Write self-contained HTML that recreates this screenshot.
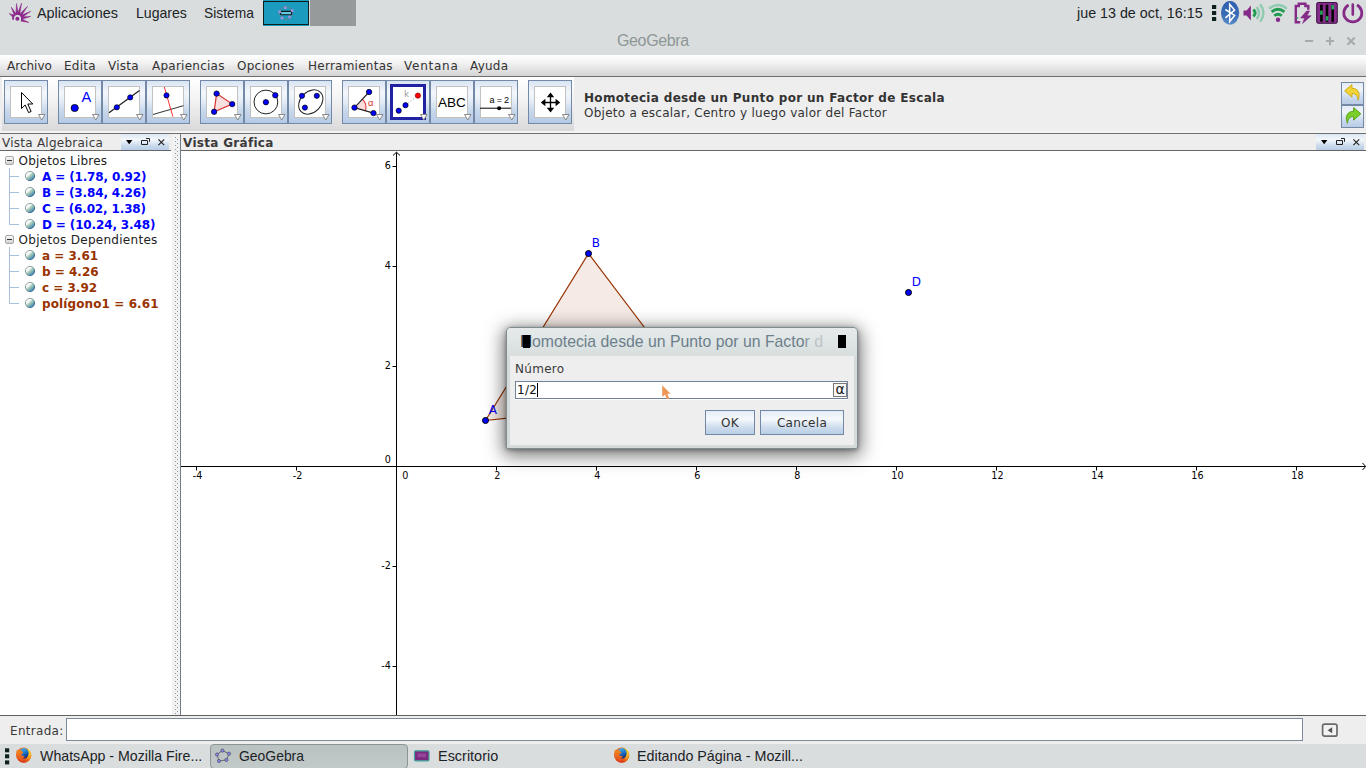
<!DOCTYPE html>
<html lang="es">
<head>
<meta charset="utf-8">
<title>GeoGebra</title>
<style>
html,body{margin:0;padding:0;}
body{width:1366px;height:768px;overflow:hidden;position:relative;background:#eeeeee;font-family:"DejaVu Sans","Liberation Sans",sans-serif;font-size:12px;color:#333;}
.abs{position:absolute;}
.t{position:absolute;white-space:nowrap;line-height:16px;height:16px;}
/* top gnome panel + window title */
#panel{left:0;top:0;width:1366px;height:55px;background:#d9dddd;}
.pf{font-family:"Liberation Sans",sans-serif;color:#1c2326;font-size:15px;transform-origin:0 0;line-height:18px;height:18px;}
.vbtn{background:linear-gradient(#dbe6f4,#f3f7fb 35%,#cddcee 70%,#b7cde6);}
/* menubar */
#menubar{left:0;top:55px;width:1366px;height:21px;background:linear-gradient(#ffffff,#f1f1f1 40%,#e0e0e0 75%,#d4d4d4);border-bottom:1px solid #6e6e6e;}
#menubar .t{top:3px;font-size:12px;color:#333;letter-spacing:0.25px;}
/* toolbar */
#toolbar{left:0;top:77px;width:1366px;height:55px;background:#eeeeee;}
#tbgrad{left:2px;top:0;width:572px;height:54px;background:linear-gradient(#ffffff,#f4f4f4 40%,#d9d9d9);}
.tb{position:absolute;top:3px;width:44px;height:44px;border:1px solid #7389a6;box-sizing:border-box;background:linear-gradient(#d9e4f3,#f3f7fc 28%,#e4edf7 48%,#c6d7ec 72%,#b4cae5);}
.tb .ic{position:absolute;left:5px;top:5px;width:32px;height:32px;background:#fff;border:1px solid #c3c1bf;box-sizing:border-box;}
.tb svg{position:absolute;left:5px;top:5px;overflow:visible;}
.tb .dd{position:absolute;left:33px;top:33px;}
.ur{position:absolute;left:1341px;width:23px;height:23px;box-sizing:border-box;border:1px solid #7389a6;background:linear-gradient(#e3ebf6,#f0f4fa 30%,#c5d6ec 75%,#b8cce5);}
.jb{box-sizing:border-box;border:1px solid #7388a5;background:linear-gradient(#e4ecf6,#f6f9fc 35%,#cfdded 70%,#b9cee6);text-align:center;color:#333;letter-spacing:0.3px;line-height:23px;padding-top:1px;}
.tb.sel .ic{left:3px;top:3px;width:36px;height:36px;border:3px solid #2121a3;}
</style>
</head>
<body>
<div id="panel" class="abs">
<svg class="abs" style="left:0;top:0" width="40" height="27"><path d="M14.5,15.3 L9.2,13.4 L13.1,17.4 Z M16.5,14.3 L11.2,7.1 L14.3,15.5 Z M18.4,14.3 L16.5,3.5 L15.9,14.5 Z M19.7,14.9 L21.6,3.1 L17.3,14.2 Z M21.1,16.2 L27.6,6.2 L19.2,14.6 Z M21.8,17.7 L30.7,11.3 L20.5,15.5 Z M21.8,19.2 L30.7,16.5 L21.4,16.8 Z M21.1,21.2 L28.9,22.5 L21.9,18.9 Z" fill="#8d2a8c" stroke="#8d2a8c" stroke-width="0.5" stroke-linejoin="round"/><path d="M13.2,19.8 A4.6,4.6 0 1 1 21.6,20.6" fill="none" stroke="#8d2a8c" stroke-width="1.9"/><circle cx="17.4" cy="18.7" r="2" fill="#8d2a8c"/></svg>
<span class="t pf" style="left:37px;top:4.2px;transform:scaleX(0.960)">Aplicaciones</span>
<span class="t pf" style="left:136px;top:4.2px;transform:scaleX(0.939)">Lugares</span>
<span class="t pf" style="left:204px;top:4.2px;transform:scaleX(0.919)">Sistema</span>
<div class="abs" style="left:263px;top:0;width:46px;height:26px;background:#1b9bbd;"></div>
<div class="abs" style="left:263px;top:1px;width:46px;height:24px;box-sizing:border-box;border:1px solid #0d1f1f;"></div>
<svg class="abs" style="left:276px;top:4px" width="20" height="18"><circle cx="10" cy="9" r="6.3" fill="none" stroke="#6f7c80" stroke-width="0.9"/><rect x="4.6" y="7.4" width="11" height="3.4" rx="0.8" fill="#63c8e0" stroke="#121a1a" stroke-width="1.1"/><circle cx="9.3" cy="3.8" r="1.5" fill="#9d90e6"/><circle cx="16.2" cy="6.6" r="1.5" fill="#9d90e6"/><circle cx="13.6" cy="13.1" r="1.5" fill="#9d90e6"/><circle cx="6" cy="13.9" r="1.5" fill="#9d90e6"/><circle cx="3.6" cy="7.7" r="1.5" fill="#9d90e6"/></svg>
<div class="abs" style="left:310px;top:0;width:46px;height:26px;background:#969a9a;"></div>
<span class="t pf" style="left:1077px;top:4.2px;transform:scaleX(0.953)">jue 13 de oct, 16:15</span>
<svg class="abs" style="left:1206px;top:0" width="160" height="27">
<rect x="6" y="5" width="4.2" height="4" fill="#0d2020"/><rect x="6" y="11" width="4.2" height="4" fill="#0d2020"/><rect x="6" y="17" width="4.2" height="4" fill="#0d2020"/>
<defs><linearGradient id="btg" x1="0" y1="0" x2="0" y2="1"><stop offset="0" stop-color="#2f5fae"/><stop offset="0.6" stop-color="#3a6cb6"/><stop offset="1" stop-color="#5b8cc8"/></linearGradient></defs>
<ellipse cx="24.1" cy="12.8" rx="9.1" ry="11.8" fill="url(#btg)"/>
<path d="M19.4,9.5 L28.6,15.4 L23.7,21.5 L23.7,4.3 L28.6,10.1 L19.4,17.8" fill="none" stroke="#fff" stroke-width="1.5" stroke-linejoin="miter"/>
<path d="M37.5,10.5 H40.6 L44.9,5.5 V20.6 L40.6,15.4 H37.5 Z" fill="#852a88"/>
<path d="M47.4,9.6 Q50.8,13 47.4,16.5" fill="none" stroke="#1f9a50" stroke-width="2.8"/>
<path d="M50.8,7 Q55.2,13 50.8,19" fill="none" stroke="#8fcbae" stroke-width="2.5"/>
<path d="M54.2,4.3 Q60.6,13 54.2,21.6" fill="none" stroke="#8fcbae" stroke-width="2.4"/>
<circle cx="72" cy="19.7" r="2.2" fill="#852a88"/>
<path d="M68.3,15.8 Q72,12.6 75.7,15.8" fill="none" stroke="#1f9a50" stroke-width="2.8"/>
<path d="M65.6,11.9 Q72,6.6 78.4,11.9" fill="none" stroke="#1f9a50" stroke-width="2.8"/>
<path d="M63.2,8.6 Q72,1.4 80.8,8.6" fill="none" stroke="#8fcbae" stroke-width="2.5"/>
<path d="M94.2,22.2 H89.8 V6 H92.8 V3.8 H99.4 V6 H102.3 V9.8" fill="none" stroke="#852a88" stroke-width="2.4"/>
<path d="M100.6,11 L94.6,18 H98.6 L96.6,23.4 L105.2,15.8 H101 L103.6,11 Z" fill="#852a88" stroke="#852a88" stroke-width="0.6" stroke-linejoin="round"/>
<rect x="90.6" y="17" width="1.6" height="2" fill="#3fae6a"/>
<rect x="110.7" y="2.5" width="20.6" height="20.8" rx="1.5" fill="#862c8a" stroke="#3a1040" stroke-width="1"/>
<rect x="114.1" y="4.5" width="2.6" height="17.5" rx="1" fill="#050505"/><rect x="119.7" y="4.5" width="2.6" height="17.5" rx="1" fill="#050505"/><rect x="125.4" y="4.5" width="2.6" height="17.5" rx="1" fill="#050505"/>
<rect x="114.1" y="10.6" width="2.6" height="4.2" fill="#22a85a"/><rect x="119.7" y="16.2" width="2.6" height="4.4" fill="#22a85a"/><rect x="125.4" y="5" width="2.6" height="4.4" fill="#22a85a"/>
<path d="M142.6,5 A9,9 0 1 0 151,5" fill="none" stroke="#852a88" stroke-width="2.7"/><path d="M146.8,4.6 V14.6" stroke="#852a88" stroke-width="2.6" stroke-linecap="round"/>
</svg>
<span class="t" style="left:617px;top:32.8px;font-family:'Liberation Sans',sans-serif;font-size:16px;letter-spacing:-0.36px;color:#8e9797;">GeoGebra</span>
<svg class="abs" style="left:1300px;top:32px" width="60" height="16"><path d="M5,9 H13.2" stroke="#a6acac" stroke-width="2"/><path d="M26,9 H34 M30,5 V13.2" stroke="#a6acac" stroke-width="2"/><path d="M47.4,5.4 L54.8,12.8 M54.8,5.4 L47.4,12.8" stroke="#a6acac" stroke-width="2.1"/></svg>
</div>
<div id="menubar" class="abs">
<span class="t" style="left:7px;letter-spacing:0">Archivo</span>
<span class="t" style="left:64px">Edita</span>
<span class="t" style="left:108px">Vista</span>
<span class="t" style="left:152px">Apariencias</span>
<span class="t" style="left:237px">Opciones</span>
<span class="t" style="left:308px">Herramientas</span>
<span class="t" style="left:404px;letter-spacing:0.75px">Ventana</span>
<span class="t" style="left:470px">Ayuda</span>
</div>
<div id="toolbar" class="abs"><div id="tbgrad" class="abs"></div>
<div class="tb" style="left:4px"><div class="ic"></div><svg width="32" height="32"><path d="M11.5,6.5 L11.5,22.5 L15.2,19 L18.6,26.6 L21.1,25.5 L17.8,18 L22.8,18 Z" fill="#fff" stroke="#000" stroke-width="1"/></svg><svg class="dd" width="9" height="8"><path d="M0.5,0.5 L7,0.5 L3.75,6 Z" fill="#fff" stroke="#888"/></svg></div>
<div class="tb" style="left:58px"><div class="ic"></div><svg width="32" height="32"><circle cx="10.7" cy="22" r="3.6" fill="#0000ff" stroke="#000" stroke-width="0.8"/><text x="17.4" y="16.4" font-family="Liberation Sans,sans-serif" font-size="14.5" fill="#0000ff">A</text></svg><svg class="dd" width="9" height="8"><path d="M0.5,0.5 L7,0.5 L3.75,6 Z" fill="#fff" stroke="#888"/></svg></div>
<div class="tb" style="left:102px"><div class="ic"></div><svg width="32" height="32"><path d="M1,26.8 L31.5,4.4" stroke="#222" stroke-width="1.3" fill="none"/><circle cx="8.8" cy="21.3" r="2.6" fill="#0000ff" stroke="#000" stroke-width="0.7"/><circle cx="22.2" cy="11.4" r="2.6" fill="#0000ff" stroke="#000" stroke-width="0.7"/></svg><svg class="dd" width="9" height="8"><path d="M0.5,0.5 L7,0.5 L3.75,6 Z" fill="#fff" stroke="#888"/></svg></div>
<div class="tb" style="left:146px"><div class="ic"></div><svg width="32" height="32"><path d="M1,28.5 L31.4,19.7" stroke="#333" stroke-width="1" fill="none"/><path d="M12.3,1 L20.9,30.7" stroke="#ff3030" stroke-width="1" fill="none"/><circle cx="14.5" cy="9.4" r="2.6" fill="#0000ff" stroke="#000" stroke-width="0.7"/></svg><svg class="dd" width="9" height="8"><path d="M0.5,0.5 L7,0.5 L3.75,6 Z" fill="#fff" stroke="#888"/></svg></div>
<div class="tb" style="left:200px"><div class="ic"></div><svg width="32" height="32"><path d="M10.6,7.6 L26.2,18.1 L8.1,25.8 Z" fill="#f9e0e0" stroke="#d83535" stroke-width="1.2"/><circle cx="10.6" cy="7.6" r="2.7" fill="#0000ff" stroke="#000" stroke-width="0.7"/><circle cx="26.2" cy="18.1" r="2.7" fill="#0000ff" stroke="#000" stroke-width="0.7"/><circle cx="8.1" cy="25.8" r="2.7" fill="#0000ff" stroke="#000" stroke-width="0.7"/></svg><svg class="dd" width="9" height="8"><path d="M0.5,0.5 L7,0.5 L3.75,6 Z" fill="#fff" stroke="#888"/></svg></div>
<div class="tb" style="left:244px"><div class="ic"></div><svg width="32" height="32"><circle cx="15.9" cy="16" r="11.9" fill="none" stroke="#222" stroke-width="1"/><circle cx="15.9" cy="16.2" r="2.7" fill="#0000ff" stroke="#000" stroke-width="0.7"/><circle cx="25.3" cy="9.3" r="2.7" fill="#0000ff" stroke="#000" stroke-width="0.7"/></svg><svg class="dd" width="9" height="8"><path d="M0.5,0.5 L7,0.5 L3.75,6 Z" fill="#fff" stroke="#888"/></svg></div>
<div class="tb" style="left:288px"><div class="ic"></div><svg width="32" height="32"><ellipse cx="16.8" cy="16" rx="13.7" ry="10.3" transform="rotate(-45 16.8 16)" fill="none" stroke="#222" stroke-width="1"/><circle cx="8" cy="9.8" r="2.6" fill="#0000ff" stroke="#000" stroke-width="0.7"/><circle cx="22.8" cy="9.8" r="2.6" fill="#0000ff" stroke="#000" stroke-width="0.7"/><circle cx="10.9" cy="21.6" r="2.6" fill="#0000ff" stroke="#000" stroke-width="0.7"/></svg><svg class="dd" width="9" height="8"><path d="M0.5,0.5 L7,0.5 L3.75,6 Z" fill="#fff" stroke="#888"/></svg></div>
<div class="tb" style="left:342px"><div class="ic"></div><svg width="32" height="32"><path d="M6.5,21.6 L14.4,13.2 A11.5,11.5 0 0 1 17.5,24.8 Z" fill="#fbdcdc" stroke="none"/><path d="M14.4,13.2 A11.5,11.5 0 0 1 17.5,24.8" fill="none" stroke="#e03030" stroke-width="1.1"/><path d="M21.1,6 L6.5,21.6 L25.5,27.1" fill="none" stroke="#222" stroke-width="1.1"/><circle cx="6.5" cy="21.6" r="2.7" fill="#0000ff" stroke="#000" stroke-width="0.7"/><circle cx="21.1" cy="6" r="2.7" fill="#0000ff" stroke="#000" stroke-width="0.7"/><circle cx="25.5" cy="27.1" r="2.7" fill="#0000ff" stroke="#000" stroke-width="0.7"/><text x="20" y="19.6" font-family="Liberation Sans,sans-serif" font-size="9.5" fill="#e03030">α</text></svg><svg class="dd" width="9" height="8"><path d="M0.5,0.5 L7,0.5 L3.75,6 Z" fill="#fff" stroke="#888"/></svg></div>
<div class="tb sel" style="left:386px"><div class="ic"></div><svg width="32" height="32"><path d="M13.5,19.2 L25.9,9.6" stroke="#aaa" stroke-width="1" stroke-dasharray="1.2,2" fill="none"/><circle cx="6.7" cy="24.7" r="2.6" fill="#0000ff" stroke="#000" stroke-width="0.7"/><circle cx="13.5" cy="19.2" r="2.6" fill="#0000ff" stroke="#000" stroke-width="0.7"/><circle cx="25.9" cy="9.6" r="2.6" fill="#ff0000" stroke="#800" stroke-width="0.7"/><text x="12.2" y="10.9" font-family="Liberation Sans,sans-serif" font-size="9" fill="#9c9c9c">k</text></svg><svg class="dd" width="9" height="8"><path d="M0.5,0.5 L7,0.5 L3.75,6 Z" fill="#fff" stroke="#888"/></svg></div>
<div class="tb" style="left:430px"><div class="ic"></div><svg width="32" height="32"><text x="2" y="20.8" font-family="Liberation Sans,sans-serif" font-size="13.5" fill="#000">ABC</text></svg><svg class="dd" width="9" height="8"><path d="M0.5,0.5 L7,0.5 L3.75,6 Z" fill="#fff" stroke="#888"/></svg></div>
<div class="tb" style="left:474px"><div class="ic"></div><svg width="32" height="32"><path d="M0,22.2 L31,22.2" stroke="#000" stroke-width="1" fill="none"/><circle cx="19.1" cy="22.2" r="2" fill="#000"/><text x="9.6" y="16.8" font-family="Liberation Sans,sans-serif" font-size="9" fill="#000" letter-spacing="-0.2">a = 2</text></svg><svg class="dd" width="9" height="8"><path d="M0.5,0.5 L7,0.5 L3.75,6 Z" fill="#fff" stroke="#888"/></svg></div>
<div class="tb" style="left:528px"><div class="ic"></div><svg width="32" height="32"><path d="M16.5,9 V24 M9.5,16.5 H23.5" stroke="#000" stroke-width="1.3" fill="none"/><path d="M16.5,6.6 L20.2,11.2 H12.8 Z M16.5,26.4 L20.2,21.8 H12.8 Z M6.8,16.5 L11.4,12.8 V20.2 Z M26.2,16.5 L21.6,12.8 V20.2 Z" fill="#000"/></svg><svg class="dd" width="9" height="8"><path d="M0.5,0.5 L7,0.5 L3.75,6 Z" fill="#fff" stroke="#888"/></svg></div>
<span class="t" style="left:584px;top:13px;font-weight:bold;letter-spacing:0.33px;">Homotecia desde un Punto por un Factor de Escala</span>
<span class="t" style="left:584px;top:28px;letter-spacing:0.26px;">Objeto a escalar, Centro y luego valor del Factor</span>
<div class="ur" style="top:5px"><svg width="21" height="21" viewBox="0 0 21 21"><path d="M3.5,8.5 L10,3 L10,6.3 C15.5,6.3 17.8,10.5 15.5,17 C15,13 13.5,11 10,11 L10,14.2 Z" fill="#f2d43a" stroke="#c9a50a" stroke-width="0.8" stroke-linejoin="round" transform="translate(10.5,10) scale(1.12) translate(-10.5,-10.5)"/></svg></div>
<div class="ur" style="top:28px"><svg width="21" height="21" viewBox="0 0 21 21"><path d="M18,8.5 L11.5,3 L11.5,6.3 C6,6.3 3.7,10.5 6,17 C6.5,13 8,11 11.5,11 L11.5,14.2 Z" fill="#7ccf2a" stroke="#4f9a10" stroke-width="0.8" stroke-linejoin="round" transform="translate(10.5,10) scale(1.12) translate(-10.5,-10.5)"/></svg></div>

</div>
<div class="abs" style="left:0;top:131px;width:1366px;height:2px;background:#f3f3f3"></div>
<div class="abs" style="left:0;top:133px;width:1366px;height:1px;background:#707070"></div>
<!-- algebra title -->
<div class="abs" style="left:0;top:134px;width:171px;height:16px;background:#eeeeee;border-bottom:1px solid #666;"></div>
<div class="abs vbtn" style="left:121px;top:134px;width:48px;height:16px;"></div>
<svg class="abs" style="left:121px;top:134px" width="48" height="16"><path d="M5,6 H11.4 L8.2,10.3 Z" fill="#000"/><path d="M20.5,6.5 H26.5 V10.5 H20.5 Z" fill="none" stroke="#222" stroke-width="1"/><path d="M25,4.5 H28.5 V7.8" fill="none" stroke="#222" stroke-width="1"/><path d="M37.4,5.4 L43.2,11.2 M43.2,5.4 L37.4,11.2" stroke="#222" stroke-width="1.15"/></svg>
<span class="t" style="left:2px;top:134.8px;color:#3a3a3a;letter-spacing:0.25px">Vista Algebraica</span>
<!-- algebra view -->
<div id="alg" class="abs" style="left:0;top:151px;width:172px;height:564px;background:#fff;">
<svg class="abs" style="left:0;top:0" width="172" height="170"><defs><linearGradient id="sph" x1="0.15" y1="0.1" x2="0.85" y2="0.9"><stop offset="0" stop-color="#ffffff"/><stop offset="0.3" stop-color="#f4f8f4"/><stop offset="0.5" stop-color="#a9ccb8"/><stop offset="0.75" stop-color="#6da4b6"/><stop offset="1" stop-color="#3a78a8"/></linearGradient><linearGradient id="sphs" x1="0.15" y1="0.1" x2="0.85" y2="0.9"><stop offset="0" stop-color="#9aa6a6"/><stop offset="1" stop-color="#2f6a90"/></linearGradient><linearGradient id="exg" x1="0" y1="0" x2="0" y2="1"><stop offset="0" stop-color="#fbfbfb"/><stop offset="1" stop-color="#cfcfcf"/></linearGradient></defs>
<path d="M9.5,17 L9.5,73.5" stroke="#a9c0dd" stroke-width="1" fill="none"/>
<path d="M9.5,96 L9.5,152.5" stroke="#a9c0dd" stroke-width="1" fill="none"/>
<rect x="5.5" y="5.5" width="8" height="8" rx="1.5" fill="url(#exg)" stroke="#a8a8a8"/>
<path d="M7,9.5 H12" stroke="#333" stroke-width="1"/>
<path d="M9.5,25.5 L19,25.5" stroke="#a9c0dd" stroke-width="1" fill="none"/>
<circle cx="30" cy="25.0" r="4.6" fill="url(#sph)" stroke="url(#sphs)" stroke-width="1"/>
<path d="M9.5,41.5 L19,41.5" stroke="#a9c0dd" stroke-width="1" fill="none"/>
<circle cx="30" cy="41.0" r="4.6" fill="url(#sph)" stroke="url(#sphs)" stroke-width="1"/>
<path d="M9.5,57.5 L19,57.5" stroke="#a9c0dd" stroke-width="1" fill="none"/>
<circle cx="30" cy="57.0" r="4.6" fill="url(#sph)" stroke="url(#sphs)" stroke-width="1"/>
<path d="M9.5,73.5 L19,73.5" stroke="#a9c0dd" stroke-width="1" fill="none"/>
<circle cx="30" cy="73.0" r="4.6" fill="url(#sph)" stroke="url(#sphs)" stroke-width="1"/>
<rect x="5.5" y="84.5" width="8" height="8" rx="1.5" fill="url(#exg)" stroke="#a8a8a8"/>
<path d="M7,88.5 H12" stroke="#333" stroke-width="1"/>
<path d="M9.5,104.5 L19,104.5" stroke="#a9c0dd" stroke-width="1" fill="none"/>
<circle cx="30" cy="104.0" r="4.6" fill="url(#sph)" stroke="url(#sphs)" stroke-width="1"/>
<path d="M9.5,120.5 L19,120.5" stroke="#a9c0dd" stroke-width="1" fill="none"/>
<circle cx="30" cy="120.0" r="4.6" fill="url(#sph)" stroke="url(#sphs)" stroke-width="1"/>
<path d="M9.5,136.5 L19,136.5" stroke="#a9c0dd" stroke-width="1" fill="none"/>
<circle cx="30" cy="136.0" r="4.6" fill="url(#sph)" stroke="url(#sphs)" stroke-width="1"/>
<path d="M9.5,152.5 L19,152.5" stroke="#a9c0dd" stroke-width="1" fill="none"/>
<circle cx="30" cy="152.0" r="4.6" fill="url(#sph)" stroke="url(#sphs)" stroke-width="1"/>
</svg>
<span class="t" style="left:18.6px;top:2.2px;color:#222;letter-spacing:0.2px">Objetos Libres</span>
<span class="t" style="left:42px;top:18.2px;color:#0000ff;font-weight:bold;letter-spacing:-0.14px">A = (1.78, 0.92)</span>
<span class="t" style="left:42px;top:34.2px;color:#0000ff;font-weight:bold;letter-spacing:-0.14px">B = (3.84, 4.26)</span>
<span class="t" style="left:42px;top:50.2px;color:#0000ff;font-weight:bold;letter-spacing:-0.14px">C = (6.02, 1.38)</span>
<span class="t" style="left:42px;top:66.2px;color:#0000ff;font-weight:bold;letter-spacing:-0.14px">D = (10.24, 3.48)</span>
<span class="t" style="left:18.6px;top:81.2px;color:#222;letter-spacing:0.28px">Objetos Dependientes</span>
<span class="t" style="left:42px;top:97.2px;color:#993300;font-weight:bold;letter-spacing:0px">a = 3.61</span>
<span class="t" style="left:42px;top:113.2px;color:#993300;font-weight:bold;letter-spacing:0px">b = 4.26</span>
<span class="t" style="left:42px;top:129.2px;color:#993300;font-weight:bold;letter-spacing:0px">c = 3.92</span>
<span class="t" style="left:42px;top:145.2px;color:#993300;font-weight:bold;letter-spacing:0.1px">polígono1 = 6.61</span>
</div>
<!-- divider -->
<div class="abs" style="left:172px;top:134px;width:8px;height:581px;background:#f1f1f1;"></div>
<div class="abs" style="left:175px;top:137px;width:1px;height:577px;background:repeating-linear-gradient(#8c9cac 0 1px,transparent 1px 4px);"></div>
<div class="abs" style="left:177px;top:139px;width:1px;height:575px;background:repeating-linear-gradient(#8c9cac 0 1px,transparent 1px 4px);"></div>
<div class="abs" style="left:180px;top:134px;width:1px;height:581px;background:#6e7c8c;"></div>
<!-- graphics title -->
<div class="abs" style="left:181px;top:134px;width:1185px;height:16px;background:#eeeeee;border-bottom:1px solid #666;"></div>
<div class="abs vbtn" style="left:1316px;top:134px;width:48px;height:16px;"></div>
<svg class="abs" style="left:1316px;top:134px" width="48" height="16"><path d="M5,6 H11.4 L8.2,10.3 Z" fill="#000"/><path d="M20.5,6.5 H26.5 V10.5 H20.5 Z" fill="none" stroke="#222" stroke-width="1"/><path d="M25,4.5 H28.5 V7.8" fill="none" stroke="#222" stroke-width="1"/><path d="M37.4,5.4 L43.2,11.2 M43.2,5.4 L37.4,11.2" stroke="#222" stroke-width="1.15"/></svg>
<span class="t" style="left:183px;top:134.8px;color:#3a3a3a;font-weight:bold;letter-spacing:0.3px">Vista Gráfica</span>
<!-- graphics view -->
<div id="gv" class="abs" style="left:181px;top:151px;width:1185px;height:564px;background:#fff;overflow:hidden;">
<svg class="abs" style="left:0;top:0" width="1185" height="564" font-family="DejaVu Sans,sans-serif" font-size="9.6" fill="#000">
<path d="M304.5,269.5 L407.5,102.5 L516.5,246.5 Z" fill="#993300" fill-opacity="0.1" stroke="#993300" stroke-width="1.2" stroke-linejoin="round"/>
<path d="M0,315.5 H1184.5 M215.5,564 V1.5" stroke="#000" stroke-width="1" fill="none"/>
<path d="M1181.5,312.0 L1184.7,315.5 L1181.5,319.0 M212.0,4.5 L215.5,1.2 L219.0,4.5" stroke="#000" stroke-width="1" fill="none"/>
<text x="16.5" y="328.0" text-anchor="middle">-4</text>
<text x="116.5" y="328.0" text-anchor="middle">-2</text>
<text x="316.4" y="328.0" text-anchor="middle">2</text>
<text x="416.4" y="328.0" text-anchor="middle">4</text>
<text x="516.4" y="328.0" text-anchor="middle">6</text>
<text x="616.4" y="328.0" text-anchor="middle">8</text>
<text x="716.4" y="328.0" text-anchor="middle">10</text>
<text x="816.4" y="328.0" text-anchor="middle">12</text>
<text x="916.4" y="328.0" text-anchor="middle">14</text>
<text x="1016.4" y="328.0" text-anchor="middle">16</text>
<text x="1116.4" y="328.0" text-anchor="middle">18</text>
<text x="209.8" y="18.1" text-anchor="end">6</text>
<text x="209.8" y="118.1" text-anchor="end">4</text>
<text x="209.8" y="218.1" text-anchor="end">2</text>
<text x="209.8" y="418.1" text-anchor="end">-2</text>
<text x="209.8" y="518.1" text-anchor="end">-4</text>
<path d="M15.5,315.5 V319.5 M115.5,315.5 V319.5 M315.5,315.5 V319.5 M415.5,315.5 V319.5 M515.5,315.5 V319.5 M615.5,315.5 V319.5 M715.5,315.5 V319.5 M815.5,315.5 V319.5 M915.5,315.5 V319.5 M1015.5,315.5 V319.5 M1115.5,315.5 V319.5 M215.5,15.5 H211.5 M215.5,115.5 H211.5 M215.5,215.5 H211.5 M215.5,415.5 H211.5 M215.5,515.5 H211.5" stroke="#000" stroke-width="1" fill="none"/>
<text x="221.3" y="328.0">0</text>
<text x="209.8" y="312.2" text-anchor="end">0</text>
<circle cx="304.5" cy="269.5" r="3" fill="#0000ff" stroke="#000" stroke-width="1"/>
<text x="307.8" y="263.2" font-size="12" fill="#0000ff">A</text>
<circle cx="407.5" cy="102.5" r="3" fill="#0000ff" stroke="#000" stroke-width="1"/>
<text x="410.8" y="96.2" font-size="12" fill="#0000ff">B</text>
<circle cx="516.5" cy="246.5" r="3" fill="#0000ff" stroke="#000" stroke-width="1"/>
<text x="519.8" y="240.2" font-size="12" fill="#0000ff">C</text>
<circle cx="727.5" cy="141.5" r="3" fill="#0000ff" stroke="#000" stroke-width="1"/>
<text x="730.8" y="135.2" font-size="12" fill="#0000ff">D</text>
</svg>
</div>
<div class="abs" style="left:0;top:715px;width:1366px;height:1px;background:#5f5f5f"></div>
<!-- input bar -->
<div class="abs" style="left:0;top:716px;width:1366px;height:28px;background:#eeeeee;"></div>
<span class="t" style="left:10px;top:723.2px;color:#3a3a3a;letter-spacing:0.3px">Entrada:</span>
<div class="abs" style="left:66px;top:718px;width:1237px;height:23px;box-sizing:border-box;background:#fff;border:1px solid #7a8a9c;"></div>
<svg class="abs" style="left:1321px;top:723px" width="18" height="15"><rect x="1.6" y="1.2" width="14.4" height="12" rx="2" fill="#f2f2f2" stroke="#6a6a6a" stroke-width="1.7"/><path d="M11.2,4.2 V10.2 L6.6,7.2 Z" fill="#555"/></svg>
<!-- taskbar -->
<div id="taskbar" class="abs" style="left:0;top:744px;width:1366px;height:24px;background:#d9dddd;">
<svg class="abs" style="left:0;top:0" width="40" height="24"><rect x="5" y="4.3" width="4.2" height="4" fill="#0d2020"/><rect x="5" y="10.3" width="4.2" height="4" fill="#0d2020"/><rect x="5" y="16.4" width="4.2" height="4" fill="#0d2020"/>
<defs><linearGradient id="ffo" x1="0" y1="0" x2="1" y2="0"><stop offset="0" stop-color="#e5521b"/><stop offset="0.55" stop-color="#ee761c"/><stop offset="0.82" stop-color="#ffd021"/><stop offset="1" stop-color="#f8a51e"/></linearGradient><linearGradient id="ffr" x1="0" y1="0" x2="0" y2="1"><stop offset="0.45" stop-color="#d9301a" stop-opacity="0"/><stop offset="1" stop-color="#d42a1a" stop-opacity="0.85"/></linearGradient><linearGradient id="ffb" x1="0.3" y1="0" x2="0.7" y2="1"><stop offset="0" stop-color="#45b3ee"/><stop offset="0.5" stop-color="#1f74c8"/><stop offset="1" stop-color="#07206e"/></linearGradient><linearGradient id="ffh" x1="0" y1="0" x2="0" y2="1"><stop offset="0" stop-color="#f28a1f"/><stop offset="1" stop-color="#e4501c"/></linearGradient></defs>
<g><circle cx="23.8" cy="11.2" r="7.6" fill="url(#ffo)"/><circle cx="23.8" cy="11.2" r="7.6" fill="url(#ffr)"/><ellipse cx="24" cy="9.3" rx="4.7" ry="5.3" fill="url(#ffb)"/><path d="M16.8,5.8 L19,6.6 L21.4,6 L22,7.6 L23.4,8.3 L21,11.2 L25.1,12.4 L22.4,14.6 L26,15.2 L22,17 L17,14 L16.2,9.5 Z" fill="url(#ffh)"/></g></svg>
<span class="t pf" style="left:40px;top:2.8px;transform:scaleX(0.945)">WhatsApp - Mozilla Fire...</span>
<div class="abs" style="left:210px;top:0;width:198px;height:25px;box-sizing:border-box;border:1px solid #8a9696;border-radius:4px;background:linear-gradient(#b9c1c1,#c2c9c9);"></div>
<svg class="abs" style="left:214px;top:3px" width="20" height="18"><path d="M8.4,3.6 L15,6.7 L12.4,12.9 L5,14 L3,7.5 Z" fill="none" stroke="#5c6168" stroke-width="0.9" stroke-linejoin="round"/><g fill="#8d89f2" stroke="#3e3e55" stroke-width="0.6"><circle cx="8.4" cy="3.6" r="1.6"/><circle cx="15" cy="6.7" r="1.6"/><circle cx="12.4" cy="12.9" r="1.6"/><circle cx="5" cy="14" r="1.6"/><circle cx="3" cy="7.5" r="1.6"/></g></svg>
<span class="t pf" style="left:239px;top:2.8px;transform:scaleX(0.928)">GeoGebra</span>
<svg class="abs" style="left:412px;top:4px" width="20" height="16"><rect x="2.5" y="2.8" width="14.5" height="10" rx="1" fill="#7b2a82" stroke="#3fa79c" stroke-width="1.2"/><rect x="5.5" y="5.5" width="8.5" height="3.6" fill="#93479a"/></svg>
<span class="t pf" style="left:438px;top:2.8px;transform:scaleX(0.963)">Escritorio</span>
<svg class="abs" style="left:597.5px;top:0" width="40" height="24"><g><circle cx="23.8" cy="11.2" r="7.6" fill="url(#ffo)"/><circle cx="23.8" cy="11.2" r="7.6" fill="url(#ffr)"/><ellipse cx="24" cy="9.3" rx="4.7" ry="5.3" fill="url(#ffb)"/><path d="M16.8,5.8 L19,6.6 L21.4,6 L22,7.6 L23.4,8.3 L21,11.2 L25.1,12.4 L22.4,14.6 L26,15.2 L22,17 L17,14 L16.2,9.5 Z" fill="url(#ffh)"/></g></svg>
<span class="t pf" style="left:637px;top:2.8px;transform:scaleX(0.952)">Editando Página - Mozill...</span>

</div>
<div id="dlg" class="abs" style="left:506px;top:327px;width:352px;height:122px;box-sizing:border-box;border:1px solid #7f8d91;border-radius:5px 5px 2px 2px;background:#d5dbdb;box-shadow:0 4px 18px 3px rgba(0,0,0,0.52),0 1px 4px rgba(0,0,0,0.35);">
<div class="abs" style="left:0;top:0;width:350px;height:28px;border-radius:4px 4px 0 0;background:linear-gradient(#e6eaea,#d8dede);"></div>
<div class="abs" style="left:3px;top:28px;width:344px;height:89px;background:#eeeeee;"></div>
<span class="t" style="left:13px;top:4px;line-height:20px;height:20px;font-family:'Liberation Sans',sans-serif;font-size:17px;color:#27322f;">H</span>
<span class="t" style="left:24.9px;top:3.8px;line-height:20px;height:20px;font-family:'Liberation Sans',sans-serif;font-size:17px;transform-origin:0 50%;transform:scaleX(0.93);color:#6c7f8b;">omotecia desde un Punto por un Facto<span style="color:#8a9aa3">r</span><span style="color:#bcc5c8"> d</span></span>
<div class="abs" style="left:16px;top:7px;width:7px;height:13px;background:#000;"></div>
<div class="abs" style="left:331px;top:7px;width:8px;height:13px;background:#000;"></div>
<span class="t" style="left:8px;top:33px;color:#3a3a3a;letter-spacing:0.3px">Número</span>
<div class="abs" style="left:8px;top:53px;width:333px;height:18px;box-sizing:border-box;background:#fff;border:1px solid #70829a;box-shadow:0 1px 0 #fff;"></div>
<span class="t" style="left:10px;top:54px;color:#111;letter-spacing:0.3px">1/2</span>
<div class="abs" style="left:30px;top:55px;width:1px;height:14px;background:#000;"></div>
<div class="abs" style="left:326px;top:55px;width:14px;height:14px;box-sizing:border-box;border:1px solid #7a7a7a;background:#f6f6f6;"></div>
<span class="t" style="left:328.5px;top:53px;font-family:'DejaVu Sans','Liberation Sans',sans-serif;font-size:14px;color:#222;">α</span>
<div class="abs jb" style="left:198px;top:82px;width:50px;height:25px;"><span>OK</span></div>
<div class="abs jb" style="left:253px;top:82px;width:84px;height:25px;"><span>Cancela</span></div>
<svg class="abs" style="left:150px;top:54px" width="16" height="20"><path d="M5.2,3.2 V15 L8,12.6 L10,17.2 L12.3,16.4 L10.3,11.8 L13.6,11.8 Z" fill="#ee9558"/></svg>
</div>


</body>
</html>
